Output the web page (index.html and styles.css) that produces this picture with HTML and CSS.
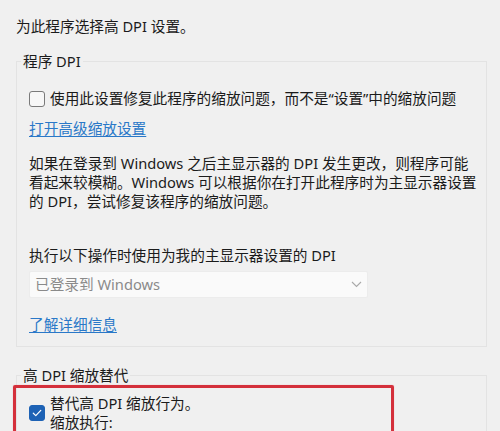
FILE: index.html
```html
<!DOCTYPE html>
<html lang="zh-CN">
<head>
<meta charset="utf-8">
<title>高 DPI 设置</title>
<link rel="stylesheet" href="styles.css">
</head>
<body>
<div class="page">
  <p class="title">为此程序选择高 DPI 设置。</p>

  <fieldset class="group">
    <legend>程序 DPI</legend>
    <label class="check-row">
      <span class="cb"></span>
      <span>使用此设置修复此程序的缩放问题，而不是“设置”中的缩放问题</span>
    </label>
    <a class="link link-first" href="#">打开高级缩放设置</a>
    <p class="para">如果在登录到 Windows 之后主显示器的 DPI 发生更改，则程序可能<br>看起来较模糊。Windows 可以根据你在打开此程序时为主显示器设置<br>的 DPI，尝试修复该程序的缩放问题。</p>
    <p class="field-label">执行以下操作时使用为我的主显示器设置的 DPI</p>
    <div class="select">
      <span>已登录到 Windows</span>
      <svg class="chev" width="11" height="7" viewBox="0 0 11 7"><path d="M1 1l4.5 4.5L10 1" fill="none" stroke="#a9a9a9" stroke-width="1.1"/></svg>
    </div>
    <a class="link link-second" href="#">了解详细信息</a>
  </fieldset>

  <fieldset class="group group-two">
    <legend>高 DPI 缩放替代</legend>
    <div class="override">
      <div class="check-row multi">
        <span class="cb checked"><svg width="10" height="8" viewBox="0 0 10 8"><path d="M1.3 4.2l2.5 2.4L8.8 1.4" fill="none" stroke="#fff" stroke-width="1.2" stroke-linecap="round" stroke-linejoin="round"/></svg></span>
        <span class="lines">替代高 DPI 缩放行为。<br>缩放执行:</span>
      </div>
      <div class="highlight"></div>
    </div>
  </fieldset>
</div>
</body>
</html>
```
FILE: styles.css
```css
html, body {
  margin: 0;
  padding: 0;
  background: #f0f0f0;
}
body {
  font-family: "Noto Sans", "Noto Sans CJK SC", sans-serif;
  font-size: 14.67px;
  line-height: 19px;
  color: #1b1b1b;
  overflow: hidden;
  height: 431px;
}
.page {
  box-sizing: border-box;
  height: 431px;
  overflow: hidden;
  padding-top: 17px;
}
p {
  margin: 0;
}
.title {
  margin-left: 16px;
}
.group {
  margin: 16px 13px 0 16px;
  padding: 18px 6px 12px 12px;
  border: 1px solid #e3e3e3;
  min-width: 0;
}
.group legend {
  padding: 0 2px;
  margin-left: -8px;
  line-height: 19px;
}
.check-row {
  display: flex;
  align-items: center;
  gap: 5px;
  white-space: nowrap;
}
.cb {
  box-sizing: border-box;
  flex: none;
  width: 16px;
  height: 16px;
  border: 1px solid #7a7a7a;
  border-radius: 3px;
  background: #f7f7f7;
  display: flex;
  align-items: center;
  justify-content: center;
}
.cb.checked {
  border-color: #1d62b5;
  background: #1d62b5;
}
.link {
  display: block;
  width: max-content;
  color: #2a78c8;
  text-decoration: underline;
  text-underline-offset: 2px;
}
.link-first {
  margin-top: 11px;
}
.para {
  margin-top: 16px;
  white-space: nowrap;
}
.field-label {
  margin-top: 35px;
}
.select {
  margin-top: 6px;
  box-sizing: border-box;
  width: 339px;
  height: 27px;
  padding: 0 5px;
  background: #fafafa;
  border: 1px solid #ececec;
  border-radius: 2px;
  color: #8a8a8a;
  display: flex;
  align-items: center;
  justify-content: space-between;
}
.link-second {
  margin-top: 17px;
}
.group-two {
  margin-top: 19px;
  padding-top: 9px;
  padding-bottom: 20px;
}
.override {
  position: relative;
}
.lines {
  white-space: nowrap;
}
.highlight {
  position: absolute;
  left: -16px;
  top: -9px;
  width: 381px;
  height: 60px;
  box-sizing: border-box;
  border: 3.5px solid #d4303b;
  border-radius: 2px;
  box-shadow: 0 0 1px rgba(230, 90, 100, 0.6);
  pointer-events: none;
}
```
